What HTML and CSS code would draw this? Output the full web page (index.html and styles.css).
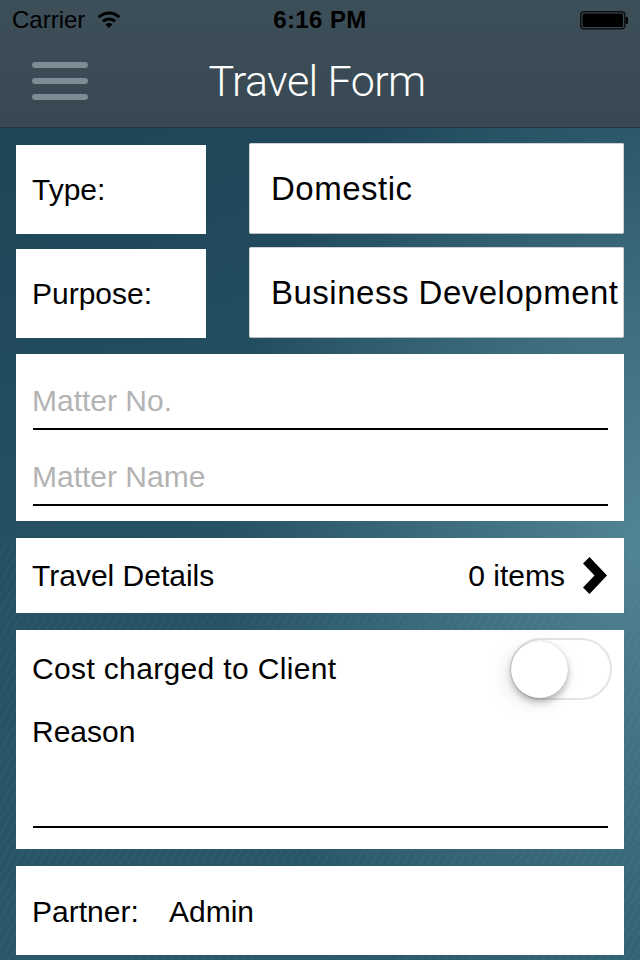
FILE: index.html
```html
<!DOCTYPE html>
<html lang="en">
<head>
<meta charset="utf-8">
<title>Travel Form</title>
<link rel="stylesheet" href="styles.css">
</head>
<body>
<div class="screen">
  <header class="topbar">
    <div class="status">
      <div class="status-left">
        <span class="carrier">Carrier</span>
        <svg class="wifi" width="24" height="18" viewBox="0 0 24 18">
          <path d="M12 17 L8.4 13.4 A5.1 5.1 0 0 1 15.6 13.4 Z" fill="#000"/>
          <path d="M5.9 10.4 A8.7 8.7 0 0 1 18.1 10.4" fill="none" stroke="#000" stroke-width="3"/>
          <path d="M1.7 6.3 A14.5 14.5 0 0 1 22.3 6.3" fill="none" stroke="#000" stroke-width="3"/>
        </svg>
      </div>
      <div class="time">6:16 PM</div>
      <div class="status-right">
        <svg class="battery" width="49" height="19" viewBox="0 0 49 19">
          <rect x="0.75" y="0.75" width="44" height="17" rx="3" fill="none" stroke="#111" stroke-width="1.5"/>
          <rect x="2.5" y="2.5" width="40.5" height="13.5" rx="1.5" fill="#000"/>
          <rect x="45.5" y="6" width="2.5" height="7" rx="1" fill="#000"/>
        </svg>
      </div>
    </div>
    <nav class="nav">
      <div class="nav-left">
        <div class="burger">
          <span></span><span></span><span></span>
        </div>
      </div>
      <h1 class="title">Travel Form</h1>
      <div class="nav-right"></div>
    </nav>
  </header>

  <main class="form">
    <div class="pairs">
      <div class="label-box">Type:</div>
      <div class="value-box">Domestic</div>
      <div class="label-box">Purpose:</div>
      <div class="value-box">Business Development</div>
    </div>

    <section class="card matter">
      <div class="field placeholder">Matter No.</div>
      <div class="field placeholder">Matter Name</div>
    </section>

    <section class="card row-card travel">
      <span>Travel Details</span>
      <span class="items">
        <span>0 items</span>
        <svg class="chevron" width="24" height="37" viewBox="0 0 24 37">
          <polygon points="0,6.5 6.5,0 24,18.5 6.5,37 0,30.5 11.5,18.5" fill="#000"/>
        </svg>
      </span>
    </section>

    <section class="card cost">
      <div class="cost-row">
        <span class="cost-label">Cost charged to Client</span>
        <div class="toggle"><div class="knob"></div></div>
      </div>
      <div class="reason">Reason</div>
    </section>

    <section class="card row-card partner">
      <span class="partner-label">Partner:</span>
      <span>Admin</span>
    </section>
  </main>
</div>
</body>
</html>
```
FILE: styles.css
```css
* { box-sizing: border-box; }

html, body {
  margin: 0;
  padding: 0;
}

body {
  font-family: "Liberation Sans", Arial, sans-serif;
  color: #000;
}

.screen {
  width: 640px;
  height: 960px;
  overflow: hidden;
  background-color: #2a5869;
  background-image:
    repeating-linear-gradient(120deg, rgba(255,255,255,0.045) 0 1px, rgba(255,255,255,0) 1px 7px),
    radial-gradient(ellipse 420px 520px at 100% 56%, rgba(88,140,156,0.85) 0%, rgba(88,140,156,0) 100%),
    linear-gradient(160deg, #1b4253 0%, #245062 45%, #2b5b6c 100%);
  background-size: 100% 420px, 100% 100%, 100% 100%;
  background-position: left bottom, 0 0, 0 0;
  background-repeat: no-repeat;
}

/* Header */
.topbar {
  background: linear-gradient(180deg, #3c4e58 0%, #3a4b55 60%, #374852 100%);
  border-bottom: 1px solid #25343c;
}

.status {
  height: 40px;
  display: grid;
  grid-template-columns: 1fr auto 1fr;
  align-items: center;
  padding: 0 12px;
}

.status-left {
  display: flex;
  align-items: center;
  gap: 12px;
}

.carrier {
  font-size: 24px;
  line-height: 28px;
}

.wifi { display: block; margin-top: -1px; }

.time {
  font-size: 24px;
  font-weight: bold;
  letter-spacing: 0.4px;
}

.status-right {
  display: flex;
  justify-content: flex-end;
}

.battery { display: block; margin-right: -1px; }

.nav {
  height: 87px;
  display: grid;
  grid-template-columns: 1fr auto 1fr;
  align-items: center;
  padding: 0 0 6px 32px;
}

.burger {
  width: 56px;
  display: flex;
  flex-direction: column;
  gap: 10px;
}

.burger span {
  display: block;
  height: 6px;
  border-radius: 3px;
  background: #7f8b92;
}

.title {
  margin: 0;
  font-family: Roboto, "Liberation Sans", sans-serif;
  font-weight: 300;
  font-size: 43px;
  letter-spacing: -0.6px;
  color: #fff;
  line-height: 50px;
  position: relative;
  left: -19px;
}

/* Form */
.form {
  padding: 16px 16px 0;
  display: flex;
  flex-direction: column;
  gap: 17px;
}

.pairs {
  display: grid;
  grid-template-columns: 190px 1fr;
  grid-auto-rows: 90px;
  column-gap: 43px;
  row-gap: 14px;
  margin-bottom: -1px;
}

.label-box {
  background: #fff;
  font-size: 30px;
  display: flex;
  align-items: center;
  padding-left: 16px;
  margin: 1px 0 0;
}

.value-box {
  background: #fff;
  font-size: 33px;
  letter-spacing: 0.5px;
  display: flex;
  align-items: center;
  padding-left: 21px;
  white-space: nowrap;
  border: 1px solid #cfd3d5;
  border-bottom-color: #b9bec1;
  border-radius: 2px;
  margin-top: -1px;
}

.card {
  background: #fff;
  font-size: 30px;
}

.matter {
  padding: 0 16px 15px 17px;
}

.field {
  height: 76px;
  padding-top: 30px;
  padding-left: 0;
  border-bottom: 2px solid #000;
  text-indent: -1px;
}

.placeholder { color: #b3b3b3; }

.row-card {
  display: flex;
  align-items: center;
  justify-content: space-between;
  padding: 0 17px 0 16px;
}

.travel { height: 75px; }

.items {
  display: flex;
  align-items: center;
  gap: 18px;
}

.chevron { display: block; }

.cost {
  height: 219px;
  padding: 8px 12px 21px 17px;
  display: flex;
  flex-direction: column;
}

.cost-row {
  display: flex;
  align-items: center;
  justify-content: space-between;
}

.cost-label {
  margin-left: -1px;
  letter-spacing: 0.35px;
}

.toggle {
  width: 102px;
  height: 62px;
  border-radius: 31px;
  border: 2.5px solid #e4e4e4;
  background: #fff;
  display: flex;
  align-items: center;
}

.knob {
  width: 57px;
  height: 57px;
  border-radius: 50%;
  background: #fff;
  margin-left: -1px;
  box-shadow: 0 4px 7px rgba(0,0,0,0.28), 0 0 1px rgba(0,0,0,0.25), -6px 6px 22px rgba(0,0,0,0.08);
}

.reason {
  margin-top: 15px;
  margin-right: 4px;
  flex: 1;
  border-bottom: 2px solid #000;
  text-indent: -1px;
}

.partner {
  height: 89px;
  justify-content: flex-start;
  padding-top: 2px;
}

.partner-label {
  width: 137px;
}
```
